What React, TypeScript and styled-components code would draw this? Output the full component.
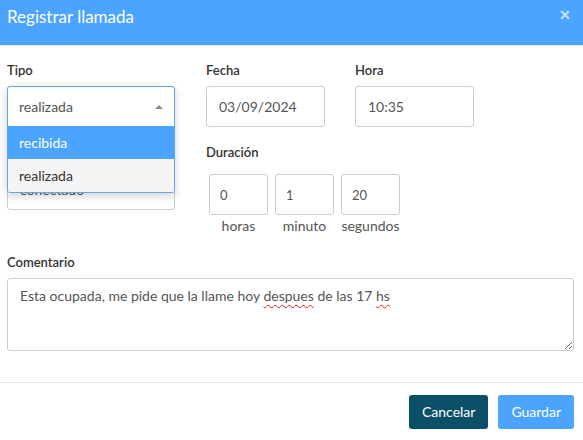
import styled, { createGlobalStyle } from "styled-components";

const GlobalStyle = createGlobalStyle`
  body {
    margin: 0;
    background: #ffffff;
    font-family: "Lato", "Noto Sans", sans-serif;
    color: #333;
  }
`;

const Modal = styled.div`
  width: 583px;
  height: 440px;
  background: #fff;
  display: flex;
  flex-direction: column;
`;

const Header = styled.div`
  height: 45px;
  background: #4ba4ff;
  border-bottom: 1px solid #e8e8e8;
  display: flex;
  align-items: center;
  justify-content: space-between;
  padding: 0 12px 0 7px;
`;

const Title = styled.div`
  color: #fff;
  font-size: 17px;
  margin-top: -12px;
`;

const Close = styled.div`
  color: #c9e1ff;
  font-size: 14px;
  font-weight: bold;
  margin-top: -16px;
`;

const Body = styled.div`
  padding: 16px 9px 0 7px;
  display: flex;
  flex-direction: column;
`;

const Row = styled.div<{ $mt?: number }>`
  display: flex;
  align-items: flex-start;
  margin-top: ${(p) => p.$mt ?? 0}px;
`;

const Field = styled.div<{ $w: number; $ml?: number; $mt?: number }>`
  width: ${(p) => p.$w}px;
  margin-left: ${(p) => p.$ml ?? 0}px;
  margin-top: ${(p) => p.$mt ?? 0}px;
  display: flex;
  flex-direction: column;
  position: relative;
`;

const Label = styled.div`
  font-size: 13px;
  font-weight: 600;
  color: #333;
  height: 16px;
  line-height: 16px;
  margin-bottom: 8px;
`;

const Input = styled.div<{ $h?: number }>`
  height: ${(p) => p.$h ?? 41}px;
  box-sizing: border-box;
  border: 1px solid #ccc;
  border-radius: 3px;
  display: flex;
  align-items: center;
  padding-left: 12px;
  font-size: 14px;
  color: #555;
`;

const SelectWrap = styled.div`
  position: relative;
  z-index: 2;
`;

const OpenSelect = styled.div`
  position: absolute;
  left: 0;
  top: 0;
  width: 168px;
  box-sizing: border-box;
  border: 1px solid #5aa8f0;
  border-radius: 3px;
  background: #fff;
  box-shadow: 0 3px 10px rgba(0, 0, 0, 0.18);
  overflow: hidden;
`;

const SelectHead = styled.div`
  height: 39px;
  display: flex;
  align-items: center;
  justify-content: space-between;
  padding: 0 11px 0 11px;
  font-size: 14px;
  color: #555;
`;

const Caret = styled.span`
  width: 0;
  height: 0;
  border-left: 4px solid transparent;
  border-right: 4px solid transparent;
  border-bottom: 4px solid #888;
`;

const Option = styled.div<{ $active?: boolean }>`
  height: 33px;
  display: flex;
  align-items: center;
  padding-left: 11px;
  font-size: 14px;
  background: ${(p) => (p.$active ? "#4ba4ff" : "#f4f4f4")};
  color: ${(p) => (p.$active ? "#fff" : "#333")};
`;

const DurationRow = styled.div`
  display: flex;
  gap: 7px;
  margin-left: 3px;
  margin-top: 6px;
`;

const DurationBox = styled.div`
  width: 59px;
  display: flex;
  flex-direction: column;
  align-items: center;
`;

const SmallInput = styled.div`
  width: 59px;
  height: 41px;
  box-sizing: border-box;
  border: 1px solid #ccc;
  border-radius: 3px;
  display: flex;
  align-items: center;
  padding-left: 10px;
  font-size: 13px;
  color: #555;
`;

const SubLabel = styled.div`
  font-size: 14px;
  color: #555;
  margin-top: 2px;
`;

const CommentArea = styled.div`
  height: 73px;
  box-sizing: border-box;
  border: 1px solid #ccc;
  border-radius: 3px;
  padding: 8px 12px;
  font-size: 14px;
  color: #555;
  resize: both;
  overflow: auto;
`;

const Misspelled = styled.span`
  text-decoration: underline wavy #e02020;
  text-decoration-thickness: 1px;
  text-underline-offset: 3px;
`;

const Footer = styled.div`
  margin-top: auto;
  border-top: 1px solid #e5e5e5;
  height: 57px;
  display: flex;
  align-items: center;
  justify-content: flex-end;
  gap: 10px;
  padding: 0 9px 0 0;
`;

const Button = styled.button<{ $variant: "dark" | "primary" }>`
  height: 34px;
  border: none;
  border-radius: 3px;
  padding: 0 13px;
  font-family: inherit;
  font-size: 14px;
  color: #fff;
  background: ${(p) => (p.$variant === "dark" ? "#0b5069" : "#4ba4ff")};
`;

export default function App() {
  return (
    <Modal>
      <GlobalStyle />
      <Header>
        <Title>Registrar llamada</Title>
        <Close>✕</Close>
      </Header>
      <Body>
        <Row>
          <Field $w={168}>
            <Label>Tipo</Label>
            <SelectWrap>
              <Input />
              <OpenSelect>
                <SelectHead>
                  realizada
                  <Caret />
                </SelectHead>
                <Option $active>recibida</Option>
                <Option>realizada</Option>
              </OpenSelect>
            </SelectWrap>
          </Field>
          <Field $w={119} $ml={31}>
            <Label>Fecha</Label>
            <Input>03/09/2024</Input>
          </Field>
          <Field $w={119} $ml={30}>
            <Label>Hora</Label>
            <Input>10:35</Input>
          </Field>
        </Row>
        <Row $mt={17}>
          <Field $w={168}>
            <Label>Estado</Label>
            <Input $h={42}>conectado</Input>
          </Field>
          <Field $w={200} $ml={31}>
            <Label>Duración</Label>
            <DurationRow>
              <DurationBox>
                <SmallInput>0</SmallInput>
                <SubLabel>horas</SubLabel>
              </DurationBox>
              <DurationBox>
                <SmallInput>1</SmallInput>
                <SubLabel>minuto</SubLabel>
              </DurationBox>
              <DurationBox>
                <SmallInput>20</SmallInput>
                <SubLabel>segundos</SubLabel>
              </DurationBox>
            </DurationRow>
          </Field>
        </Row>
        <Field $w={567} $mt={20}>
          <Label>Comentario</Label>
          <CommentArea>
            Esta ocupada, me pide que la llame hoy <Misspelled>despues</Misspelled> de las 17{" "}
            <Misspelled>hs</Misspelled>
          </CommentArea>
        </Field>
      </Body>
      <Footer>
        <Button $variant="dark">Cancelar</Button>
        <Button $variant="primary">Guardar</Button>
      </Footer>
    </Modal>
  );
}
